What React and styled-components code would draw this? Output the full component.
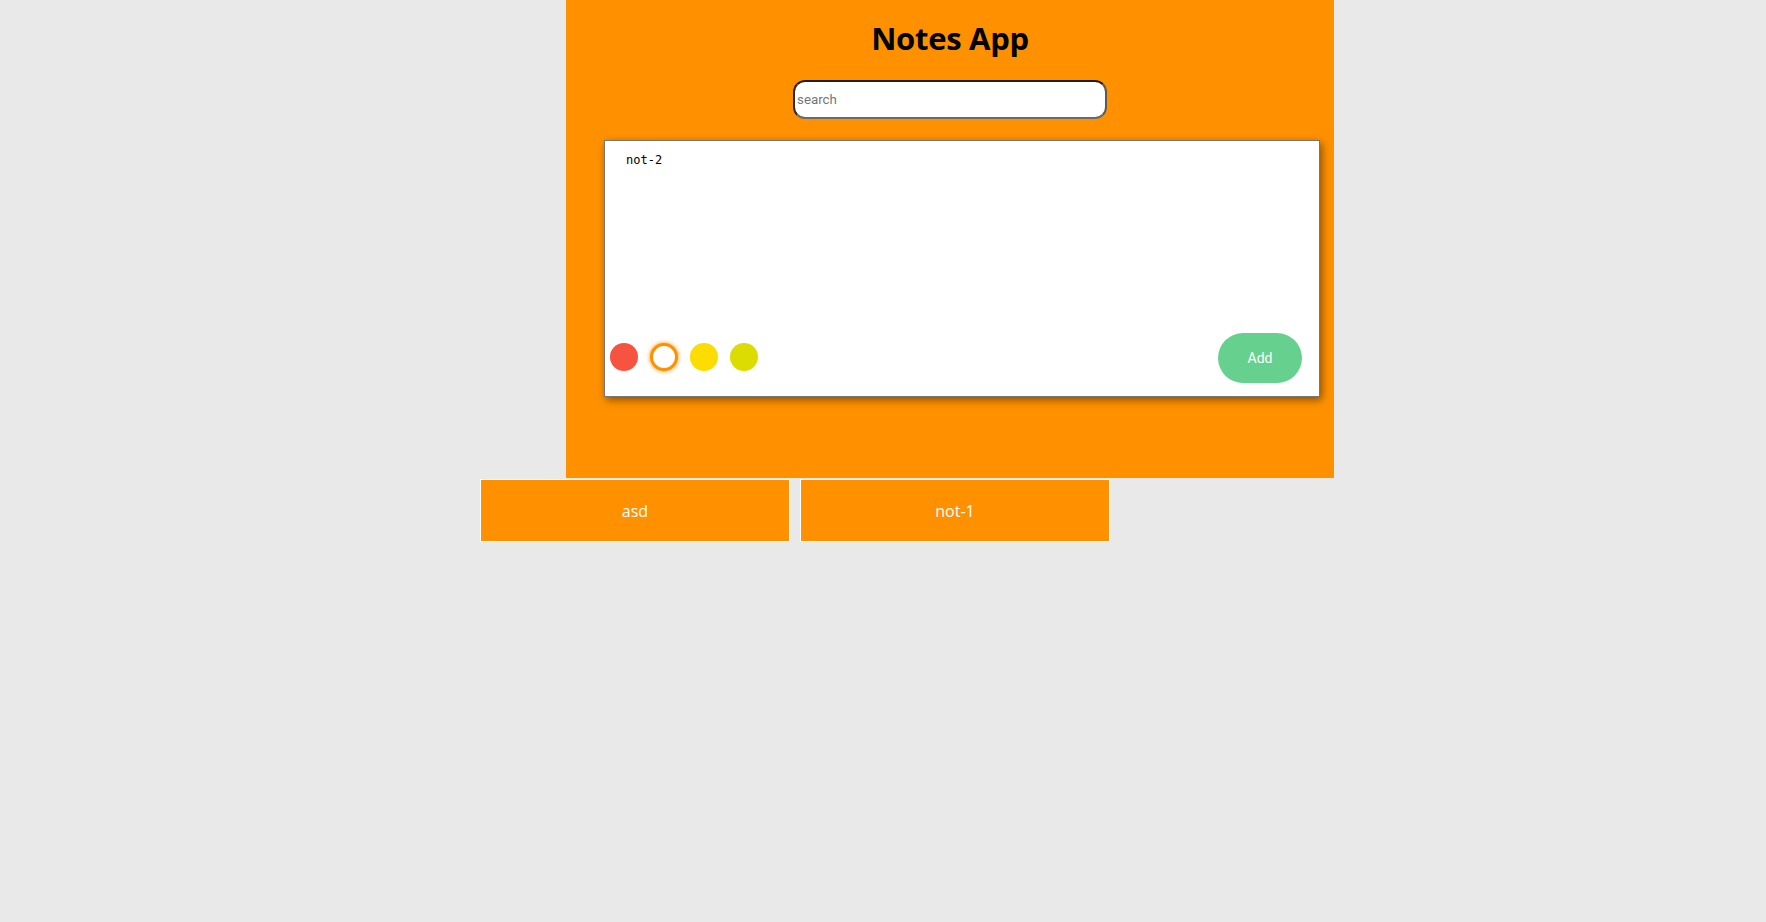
import React, { useState } from 'react';
import styled, { createGlobalStyle } from 'styled-components';

const colors = ['#f65341', '#ffffff', '#fddc00', '#dcdc00'];
const notes = [{ id: 1, text: 'asd' }, { id: 2, text: 'not-1' }];

function App() {
  const [active, setActive] = useState(1);
  const [text, setText] = useState('not-2');

  return (
    <Page>
      <GlobalStyle />
      <Panel>
        <Title>Notes App</Title>
        <Search placeholder="search" />
        <Editor>
          <TextArea value={text} onChange={(e) => setText(e.target.value)} />
          <EditorFooter>
            <Swatches>
              {colors.map((c, i) => (
                <Swatch
                  key={c}
                  $color={c}
                  $active={i === active}
                  onClick={() => setActive(i)}
                />
              ))}
            </Swatches>
            <AddButton>Add</AddButton>
          </EditorFooter>
        </Editor>
      </Panel>
      <NoteList>
        {notes.map((note) => (
          <NoteItem key={note.id}>{note.text}</NoteItem>
        ))}
      </NoteList>
    </Page>
  );
}

/* STYLED COMPONENTS */
const GlobalStyle = createGlobalStyle`
  body {
    margin: 0;
    background: #e9e9e9;
    font-family: "Open Sans", "Liberation Sans", sans-serif;
  }
`

const Page = styled.div`
  min-height: 100vh;
  background: #e9e9e9;
`

const Panel = styled.div`
  display: flex;
  flex-direction: column;
  align-items: center;
  width: 768px;
  height: 478px;
  margin-left: 566px;
  background: #ff9100;
`

const Title = styled.h1`
  margin: 17px 0 21px;
  font-size: 31px;
  font-weight: 700;
  letter-spacing: -0.3px;
  color: #000;
`

const Search = styled.input`
  box-sizing: border-box;
  width: 314px;
  height: 39px;
  padding: 1px 2px;
  border: 2px solid;
  border-color: #1e1e1e #5a5a5a #6a6a6a #2a2a2a;
  border-radius: 12px;
  background: #fff;
  font-family: Roboto, sans-serif;
  font-size: 13.33px;
  outline: none;

  &::placeholder {
    color: #757575;
  }
`

const Editor = styled.div`
  box-sizing: border-box;
  display: flex;
  flex-direction: column;
  align-self: flex-start;
  width: 716px;
  height: 257px;
  margin: 21px 0 0 38px;
  background: #fff;
  border: 1px solid #777;
  box-shadow: 2px 3px 8px rgba(0, 0, 0, 0.45);
`

const TextArea = styled.textarea`
  flex: 1;
  padding: 12px 21px 10px;
  border: none;
  outline: none;
  resize: none;
  font-family: "DejaVu Sans Mono", monospace;
  font-size: 12px;
  color: #000;
`

const EditorFooter = styled.div`
  display: flex;
  align-items: center;
  justify-content: space-between;
  padding: 0 17px 13px 5px;
`

const Swatches = styled.div`
  display: flex;
  gap: 12px;
  margin-bottom: 2px;
`

const Swatch = styled.button`
  box-sizing: border-box;
  width: 28px;
  height: 28px;
  padding: 0;
  border-radius: 50%;
  background: ${(p) => p.$color};
  border: ${(p) => (p.$active ? '3px solid #ff9100' : 'none')};
  box-shadow: ${(p) => (p.$active ? '0 0 4px #ff9100' : 'none')};
  cursor: pointer;
`

const AddButton = styled.button`
  width: 84px;
  height: 50px;
  border: none;
  border-radius: 25px;
  background: #66d18f;
  color: #fff;
  font-family: Roboto, sans-serif;
  font-size: 14px;
  cursor: pointer;
`

const NoteList = styled.div`
  display: flex;
  gap: 10px;
  margin: 1px 0 0 480px;
`

const NoteItem = styled.div`
  box-sizing: border-box;
  display: flex;
  align-items: center;
  justify-content: center;
  width: 310px;
  height: 63px;
  background: #ff9100;
  border: 1px solid #fff;
  color: #fff;
  font-size: 16px;
`

export default App;
